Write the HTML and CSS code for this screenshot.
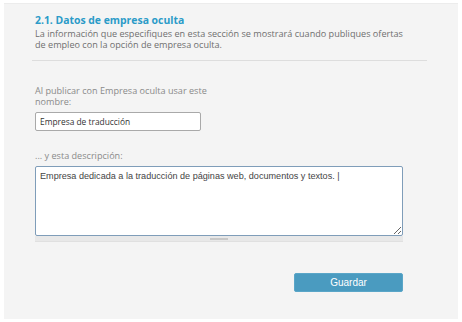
FILE: index.html
```html
<!doctype html>
<html lang="es">
<head>
  <meta charset="UTF-8">
  <title>Datos de empresa oculta</title>
  <link rel="stylesheet" href="styles.css">
</head>
<body>
  <div class="panel">
    <div class="section-head">
      <h2 class="section-title">2.1. Datos de empresa oculta</h2>
      <p class="section-desc">La información que especifiques en esta sección se mostrará cuando publiques ofertas de empleo con la opción de empresa oculta.</p>
    </div>

    <form class="hidden-form">
      <label class="field-label name-label" for="companyName">Al publicar con Empresa oculta usar este nombre:</label>
      <input class="text-input" id="companyName" type="text" value="Empresa de traducción">

      <label class="field-label desc-label" for="companyDesc">... y esta descripción:</label>
      <div class="textarea-wrap">
        <textarea class="text-area" id="companyDesc">Empresa dedicada a la traducción de páginas web, documentos y textos. |</textarea>
        <div class="grippie"><span></span></div>
      </div>

      <div class="form-actions">
        <button type="button" class="save-btn">Guardar</button>
      </div>
    </form>
  </div>
</body>
</html>
```

FILE: styles.css
```css
* {
    margin: 0;
    padding: 0;
    box-sizing: border-box;
}

body {
    background-color: #fff;
    font-family: "Open Sans", Arial, sans-serif;
}

.panel {
    margin: 3px 4px;
    width: 454px;
    height: 316px;
    background-color: #f4f4f4;
    border-top: 1px solid #ececec;
    padding: 9px 0 0 31px;
}

.section-head {
    width: 395px;
    margin-left: -3px;
    padding-left: 3px;
    padding-bottom: 10px;
    border-bottom: 1px solid #dddddd;
}

.section-title {
    font-size: 10.4px;
    font-weight: bold;
    color: #2b9bc8;
    line-height: 15px;
}

.section-desc {
    max-width: 372px;
    font-size: 9.1px;
    line-height: 11px;
    color: #6f6f6f;
}

.hidden-form {
    display: flex;
    flex-direction: column;
    align-items: flex-start;
}

.field-label {
    font-size: 9.1px;
    line-height: 11px;
    color: #8a8a8a;
}

.name-label {
    width: 176px;
    margin-top: 24px;
}

.text-input {
    margin-top: 5px;
    width: 166px;
    height: 19px;
    border: 1px solid #a9a9a9;
    border-radius: 2px;
    background-color: #fff;
    padding: 0 4px;
    font-family: "Open Sans", Arial, sans-serif;
    font-size: 8.4px;
    color: #333;
}

.desc-label {
    margin-top: 19px;
}

.textarea-wrap {
    margin-top: 5px;
    width: 368px;
}

.text-area {
    display: block;
    width: 368px;
    height: 70px;
    border: 1px solid #7f9db9;
    border-radius: 2px;
    background-color: #fff;
    padding: 3px 4px;
    font-family: "Liberation Sans", Arial, sans-serif;
    font-size: 9.1px;
    line-height: 12px;
    color: #444;
}

.grippie {
    height: 6px;
    background-color: #e8e8e8;
    border-bottom: 1px solid #e0e0e0;
    display: flex;
    justify-content: center;
    align-items: center;
}

.grippie span {
    width: 18px;
    height: 2px;
    background-color: #c8c8c8;
}

.form-actions {
    width: 368px;
    display: flex;
    justify-content: flex-end;
    margin-top: 31px;
}

.save-btn {
    width: 109px;
    height: 19px;
    background-color: #4a9bc0;
    color: #fff;
    border: 1px solid #5aa6c8;
    border-radius: 2px;
    font-family: "Liberation Sans", Arial, sans-serif;
    font-size: 10px;
    cursor: pointer;
}
```
